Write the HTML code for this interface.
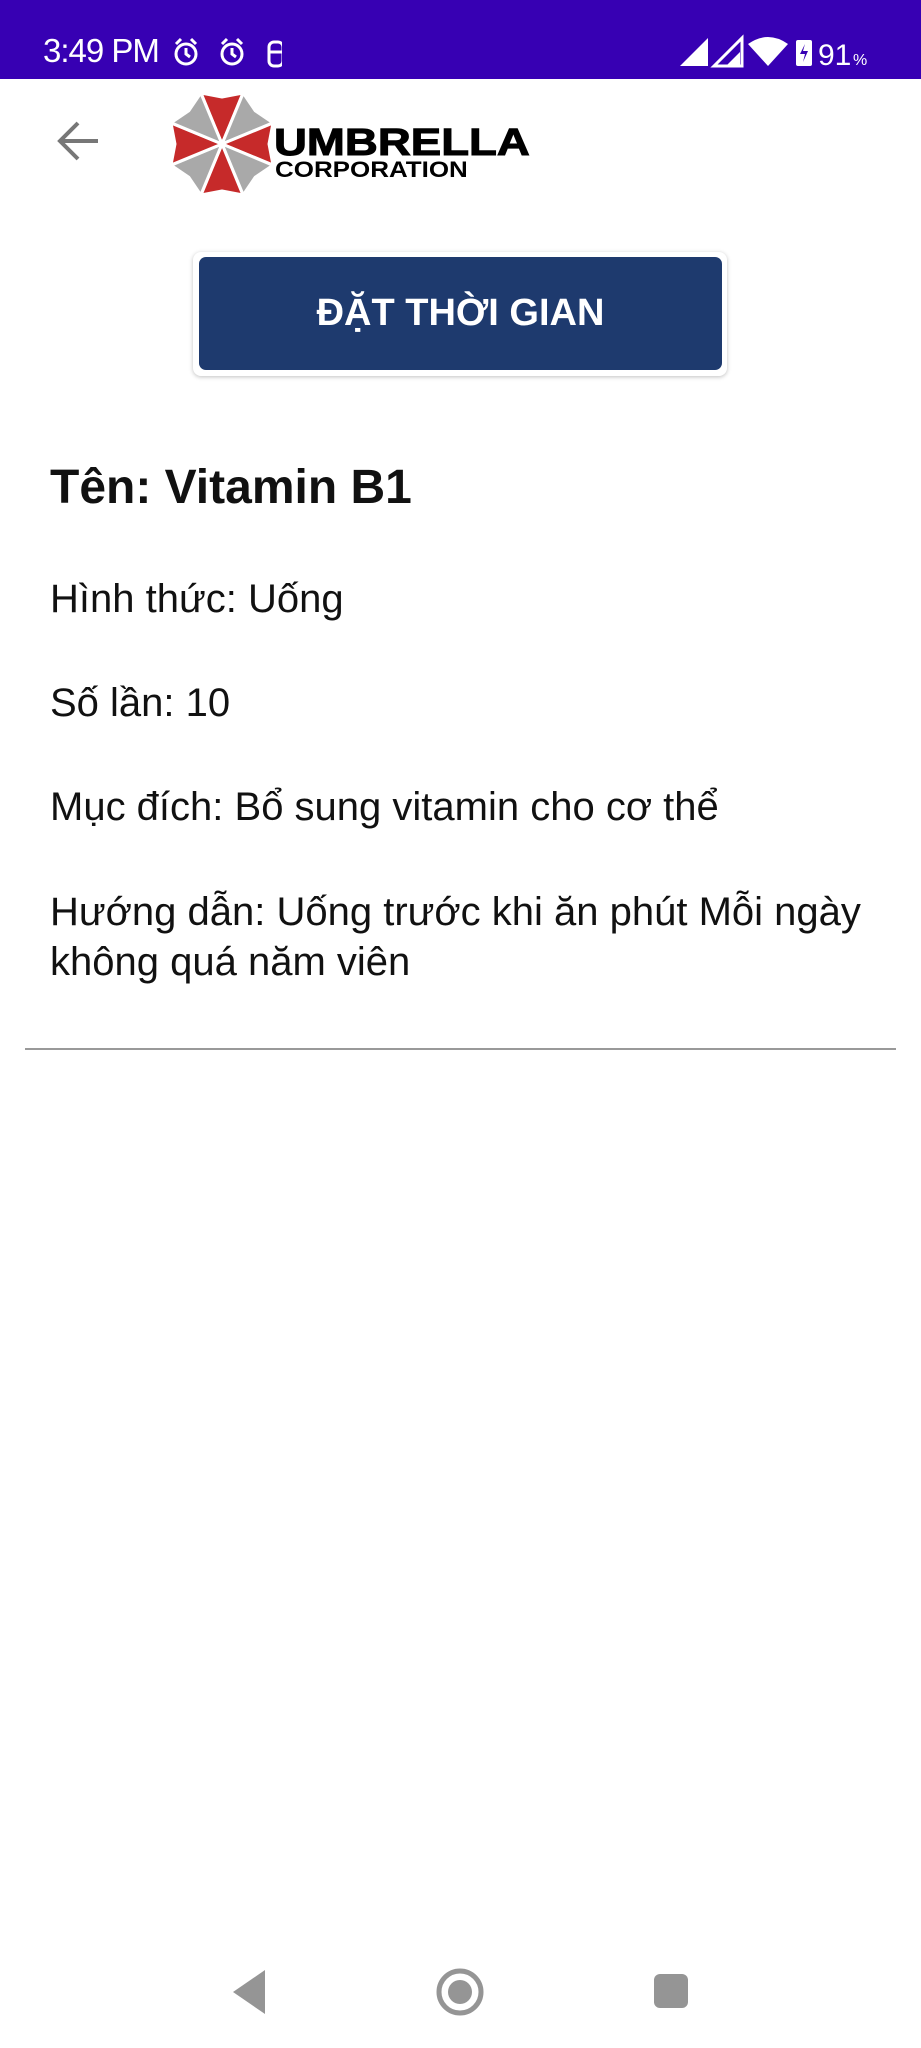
<!DOCTYPE html>
<html><head><meta charset="utf-8"><style>
*{margin:0;padding:0;box-sizing:border-box}
body{width:921px;height:2048px;background:#fff;position:relative;overflow:hidden;font-family:"Liberation Sans","DejaVu Sans",sans-serif;color:#111}
.sb{position:absolute;left:0;top:0;width:921px;height:79px;background:#3700b3;color:#fff}
.sb .t{position:absolute;left:43px;top:32px;font-size:33px;letter-spacing:-1px}
.ab{position:absolute}
.txt{position:absolute;left:50px;font-size:40px;white-space:nowrap;letter-spacing:0;line-height:50px}
</style></head><body>
<div class="sb"><div class="t">3:49 PM</div>
<svg class="ab" style="left:172px;top:36px" width="110" height="34" viewBox="0 0 110 34" fill="none" stroke="#fff" stroke-width="3">
<circle cx="14" cy="18" r="10"/><path d="M14 12v6l4 3M4 8l5-5M24 8l-5-5"/>
<circle cx="60" cy="18" r="10"/><path d="M60 12v6l4 3M50 8l5-5M70 8l-5-5"/>
<rect x="97" y="6" width="14" height="24" rx="5"/><path d="M97 16h14"/>
</svg>
<svg class="ab" style="left:678px;top:34px" width="210" height="34" viewBox="0 0 210 34">
<path d="M2 32L30 4V32Z" fill="#fff"/><path d="M36 32L64 4V32Z" fill="none" stroke="#fff" stroke-width="3"/><path d="M48 32L62 18V32Z" fill="#fff"/>
<path d="M70 10Q90 -4 110 10L90 32Z" fill="#fff"/>
<rect x="118" y="6" width="16" height="26" rx="2" fill="#fff"/><path d="M127 10l-5 10h5l-2 8 5-11h-5z" fill="#3700b3"/>
<text x="140" y="31" font-size="30" fill="#fff" font-family="Liberation Sans">91</text><text x="175" y="31" font-size="16" fill="#fff" font-family="Liberation Sans">%</text>
</svg>
</div>
<svg class="ab" style="left:56px;top:121px" width="44" height="40" viewBox="0 0 44 40" fill="none" stroke="#777" stroke-width="4"><path d="M42 20H4M22 2L4 20l18 18"/></svg>
<svg class="ab" style="left:170px;top:90px" width="104" height="108" viewBox="-52 -54 104 108">
<g stroke="#fff" stroke-width="3" stroke-linejoin="round">
<path d="M0 0L-21-51L0-47L21-51Z" fill="#c62a2a"/>
<path d="M0 0L-21-51L0-47L21-51Z" fill="#a9a9a9" transform="rotate(45)"/>
<path d="M0 0L-21-51L0-47L21-51Z" fill="#c62a2a" transform="rotate(90)"/>
<path d="M0 0L-21-51L0-47L21-51Z" fill="#a9a9a9" transform="rotate(135)"/>
<path d="M0 0L-21-51L0-47L21-51Z" fill="#c62a2a" transform="rotate(180)"/>
<path d="M0 0L-21-51L0-47L21-51Z" fill="#a9a9a9" transform="rotate(225)"/>
<path d="M0 0L-21-51L0-47L21-51Z" fill="#c62a2a" transform="rotate(270)"/>
<path d="M0 0L-21-51L0-47L21-51Z" fill="#a9a9a9" transform="rotate(315)"/>
</g></svg>
<div class="ab" style="left:274px;top:124px;font-size:38px;font-weight:bold;color:#000;line-height:38px;transform:scaleX(1.2);transform-origin:left;-webkit-text-stroke:1px #000">UMBRELLA</div>
<div class="ab" style="left:275px;top:159px;font-size:22px;font-weight:bold;color:#000;line-height:22px;transform:scaleX(1.18);transform-origin:left">CORPORATION</div>
<div class="ab" style="left:193px;top:252px;width:534px;height:124px;border-radius:8px;box-shadow:0 1px 4px rgba(0,0,0,.25);background:#fff"></div>
<div class="ab" style="left:199px;top:257px;width:523px;height:113px;background:#1e3a6e;border-radius:7px;color:#fff;font-weight:bold;font-size:38px;text-align:center;line-height:113px">ĐẶT THỜI GIAN</div>
<div class="txt" style="top:460px;font-size:48px;font-weight:bold;line-height:56px">Tên: Vitamin B1</div>
<div class="txt" style="top:574px">Hình thức: Uống</div>
<div class="txt" style="top:678px">Số lần: 10</div>
<div class="txt" style="top:782px">Mục đích: Bổ sung vitamin cho cơ thể</div>
<div class="txt" style="top:887px">Hướng dẫn: Uống trước khi ăn phút Mỗi ngày<br>không quá năm viên</div>
<div class="ab" style="left:25px;top:1048px;width:871px;height:2px;background:#999"></div>
<svg class="ab" style="left:230px;top:1965px" width="460" height="54" viewBox="0 0 460 54" fill="#959595">
<path d="M35 5v44L3 27Z"/>
<circle cx="230" cy="27" r="21" fill="none" stroke="#959595" stroke-width="5"/><circle cx="230" cy="27" r="12"/>
<rect x="424" y="9" width="34" height="34" rx="6"/>
</svg>
</body></html>
